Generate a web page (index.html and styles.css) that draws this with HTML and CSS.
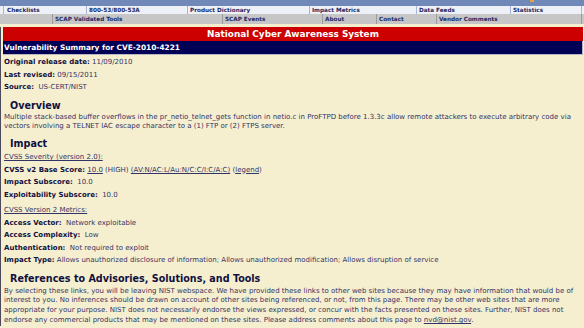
FILE: index.html
```html
<!DOCTYPE html>
<html lang="en">
<head>
<meta charset="UTF-8">
<title>Vulnerability Summary for CVE-2010-4221</title>
<link rel="stylesheet" href="styles.css">
</head>
<body>
<div class="topstrip"><span class="feed-icon"></span></div>
<div class="menu">
  <div class="menu-row row-one">
    <a class="c1" href="#">Checklists</a>
    <a class="c2" href="#">800-53/800-53A</a>
    <a class="c3" href="#">Product Dictionary</a>
    <a class="c4" href="#">Impact Metrics</a>
    <a class="c5" href="#">Data Feeds</a>
    <a class="c6" href="#">Statistics</a>
  </div>
  <div class="menu-row row-two">
    <span class="d0"></span>
    <a class="d1" href="#">SCAP Validated Tools</a>
    <a class="d2" href="#">SCAP Events</a>
    <a class="d3" href="#">About</a>
    <a class="d4" href="#">Contact</a>
    <a class="d5" href="#">Vendor Comments</a>
  </div>
</div>

<div class="page">
  <div class="banner">National Cyber Awareness System</div>
  <div class="title-bar">Vulnerability Summary for CVE-2010-4221</div>

  <div class="content">
    <div class="line"><b>Original release date:</b> 11/09/2010</div>
    <div class="line"><b>Last revised:</b> 09/15/2011</div>
    <div class="line"><b>Source:</b> &nbsp;US-CERT/NIST</div>

    <h2>Overview</h2>
    <p class="para">Multiple stack-based buffer overflows in the pr_netio_telnet_gets function in netio.c in ProFTPD before 1.3.3c allow remote attackers to execute arbitrary code via vectors involving a TELNET IAC escape character to a (1) FTP or (2) FTPS server.</p>

    <h2>Impact</h2>
    <div class="line"><a href="#">CVSS Severity (version 2.0):</a></div>
    <div class="line"><b>CVSS v2 Base Score:</b> <a href="#">10.0</a> (HIGH) <a href="#">(AV:N/AC:L/Au:N/C:C/I:C/A:C)</a> (<a href="#">legend</a>)</div>
    <div class="line"><b>Impact Subscore:</b> &nbsp;10.0</div>
    <div class="line"><b>Exploitability Subscore:</b> &nbsp;10.0</div>
    <div class="line gap"><a href="#">CVSS Version 2 Metrics:</a></div>
    <div class="line"><b>Access Vector:</b> &nbsp;Network exploitable</div>
    <div class="line"><b>Access Complexity:</b> &nbsp;Low</div>
    <div class="line"><b>Authentication:</b> &nbsp;Not required to exploit</div>
    <div class="line"><b>Impact Type:</b> Allows unauthorized disclosure of information; Allows unauthorized modification; Allows disruption of service</div>

    <h2 class="refs">References to Advisories, Solutions, and Tools</h2>
    <p class="para refs-text">By selecting these links, you will be leaving NIST webspace. We have provided these links to other web sites because they may have information that would be of interest to you. No inferences should be drawn on account of other sites being referenced, or not, from this page. There may be other web sites that are more appropriate for your purpose. NIST does not necessarily endorse the views expressed, or concur with the facts presented on these sites. Further, NIST does not endorse any commercial products that may be mentioned on these sites. Please address comments about this page to <a href="#">nvd@nist.gov</a>.</p>
  </div>
</div>
</body>
</html>
```

FILE: styles.css
```css
body {
  margin: 0;
  padding: 0;
  background-color: #f6efcf;
  font-family: "DejaVu Sans", Verdana, sans-serif;
  color: #333366;
  overflow: hidden;
}

a {
  color: #333366;
}

.topstrip {
  height: 6px;
  background-color: #7089b8;
  position: relative;
}
.feed-icon {
  position: absolute;
  left: 530px;
  top: 0;
  width: 4px;
  height: 2px;
  background-color: #e8a040;
}

/* two rows of menu cells */
.menu-row {
  display: flex;
  font-size: 5.7px;
  font-weight: bold;
}
.menu-row a {
  display: block;
  text-decoration: none;
  color: #1c2a66;
  padding-left: 2px;
  box-sizing: border-box;
}
.row-one {
  height: 8px;
  line-height: 8px;
  background-color: #eef0f7;
  padding-left: 3px;
}
.row-one a {
  border-left: 1px solid #a8b6d8;
}
.row-one .c1 { width: 83px; padding-left: 3px; }
.row-one .c2 { width: 101px; }
.row-one .c3 { width: 122px; }
.row-one .c4 { width: 107px; }
.row-one .c5 { width: 94px; }
.row-one .c6 { width: 72px; border-right: 1px solid #a8b6d8; }

.row-two {
  height: 10px;
  line-height: 10px;
  background-color: #c6c6c6;
}
.row-two a {
  border-left: 1px solid #9c9c9c;
}
.row-two .d0 { width: 52px; }
.row-two .d1 { width: 170px; }
.row-two .d2 { width: 100px; }
.row-two .d3 { width: 54px; }
.row-two .d4 { width: 60px; }
.row-two .d5 { width: 146px; border-right: 1px solid #9c9c9c; }

.page {
  margin-top: 3px;
  border-left: 1px solid #4a4a5a;
  padding-left: 2px;
  padding-right: 1px;
}

.banner {
  background-color: #cc0000;
  color: #fff;
  font-weight: bold;
  font-size: 8.9px;
  text-align: center;
  height: 14px;
  line-height: 14px;
}
.title-bar {
  background-color: #000055;
  color: #fff;
  font-weight: bold;
  font-size: 7.4px;
  height: 13px;
  line-height: 13px;
  padding-left: 1px;
  border-right: 1px solid #b8b8c8;
  border-bottom: 1px solid #b8b8c8;
}

.content {
  padding: 1px 0 0 1px;
  font-size: 7px;
}
.line {
  line-height: 12.5px;
}
.line b {
  color: #10103f;
}
.gap {
  margin-top: 3px;
}

h2 {
  margin: 4px 0 0 6px;
  font-size: 9.6px;
  line-height: 15px;
  color: #10103f;
}
h2.refs {
  margin-top: 4px;
}
.para {
  margin: 0;
  line-height: 9.8px;
}
.refs-text {
  margin-top: 1px;
}
```
